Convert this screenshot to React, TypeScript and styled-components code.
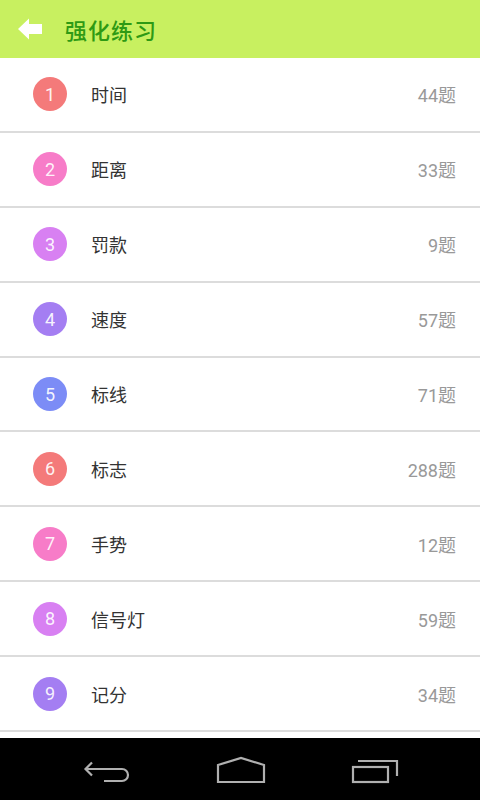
import React from 'react';
import styled, { createGlobalStyle } from 'styled-components';

const GlobalStyle = createGlobalStyle`
  html, body {
    margin: 0;
    padding: 0;
    background: #ffffff;
  }
  body {
    font-family: Roboto, "Noto Sans CJK SC", sans-serif;
  }
`;

const Screen = styled.div`
  width: 480px;
  height: 800px;
  display: flex;
  flex-direction: column;
  overflow: hidden;
  background: #ffffff;
`;

const Header = styled.div`
  height: 58px;
  flex-shrink: 0;
  display: flex;
  align-items: center;
  background: #c8f060;
  padding-left: 17px;
  gap: 22px;
`;

const BackButton = styled.button`
  border: none;
  background: none;
  padding: 0;
  width: 26px;
  height: 24px;
  display: flex;
  align-items: center;
  justify-content: center;
`;

const Title = styled.h1`
  margin: 0;
  font-family: "Noto Sans CJK SC", sans-serif;
  font-size: 22px;
  font-weight: 500;
  color: #2e9a14;
  letter-spacing: 1px;
`;

const List = styled.ul`
  list-style: none;
  margin: 0;
  padding: 0;
  flex: 1;
  overflow: hidden;
`;

const Row = styled.li`
  height: 72.9px;
  display: flex;
  align-items: center;
  padding: 0 24px 0 33px;
  border-bottom: 2px solid #dcdcdc;
`;

const Badge = styled.span<{ $color: string }>`
  width: 34px;
  height: 34px;
  border-radius: 50%;
  background: ${(p) => p.$color};
  color: rgba(255, 255, 255, 0.92);
  display: flex;
  align-items: center;
  justify-content: center;
  font-family: Roboto, sans-serif;
  font-size: 18px;
  flex-shrink: 0;
`;

const Label = styled.span`
  margin-left: 24px;
  flex: 1;
  font-family: "Noto Sans CJK SC", sans-serif;
  font-size: 18px;
  color: #333333;
`;

const Count = styled.span`
  font-family: Roboto, "Noto Sans CJK SC", sans-serif;
  font-size: 18px;
  color: #999999;
`;

const NavBar = styled.div`
  height: 62px;
  flex-shrink: 0;
  background: #000000;
  display: flex;
  align-items: center;
  padding-left: 82px;
  gap: 84px;
`;

const NavIcon = styled.svg`
  width: 50px;
  height: 30px;
  stroke: #b0b0b0;
  stroke-width: 2.2;
  fill: none;
`;

const COLORS = ['#f47a7a', '#f77cc8', '#d880f2', '#a47ef2', '#7c8cf6'];

const ITEMS = [
  { name: '时间', count: 44 },
  { name: '距离', count: 33 },
  { name: '罚款', count: 9 },
  { name: '速度', count: 57 },
  { name: '标线', count: 71 },
  { name: '标志', count: 288 },
  { name: '手势', count: 12 },
  { name: '信号灯', count: 59 },
  { name: '记分', count: 34 },
  { name: '综合', count: 120 },
];

export default function App() {
  return (
    <Screen>
      <GlobalStyle />
      <Header>
        <BackButton aria-label="返回">
          <svg width="26" height="24" viewBox="0 0 26 24">
            <path d="M1 12 L12 1.5 L12 7 L25 7 L25 17 L12 17 L12 22.5 Z" fill="#ffffff" />
          </svg>
        </BackButton>
        <Title>强化练习</Title>
      </Header>
      <List>
        {ITEMS.map((item, i) => (
          <Row key={item.name}>
            <Badge $color={COLORS[i % COLORS.length]}>{i + 1}</Badge>
            <Label>{item.name}</Label>
            <Count>{item.count}题</Count>
          </Row>
        ))}
      </List>
      <NavBar>
        <NavIcon viewBox="0 0 50 30">
          <path d="M4 15 L40 15 A6 6 0 0 1 40 27 L22 27" />
          <path d="M10 8.5 L3.5 15 L10 21.5" />
        </NavIcon>
        <NavIcon viewBox="0 0 50 30">
          <path d="M2 28 L2 11 L25 4 L48 11 L48 28 Z" />
        </NavIcon>
        <NavIcon viewBox="0 0 50 30">
          <rect x="3" y="13" width="35" height="15" />
          <path d="M8 7 L47 7 L47 22" />
        </NavIcon>
      </NavBar>
    </Screen>
  );
}
